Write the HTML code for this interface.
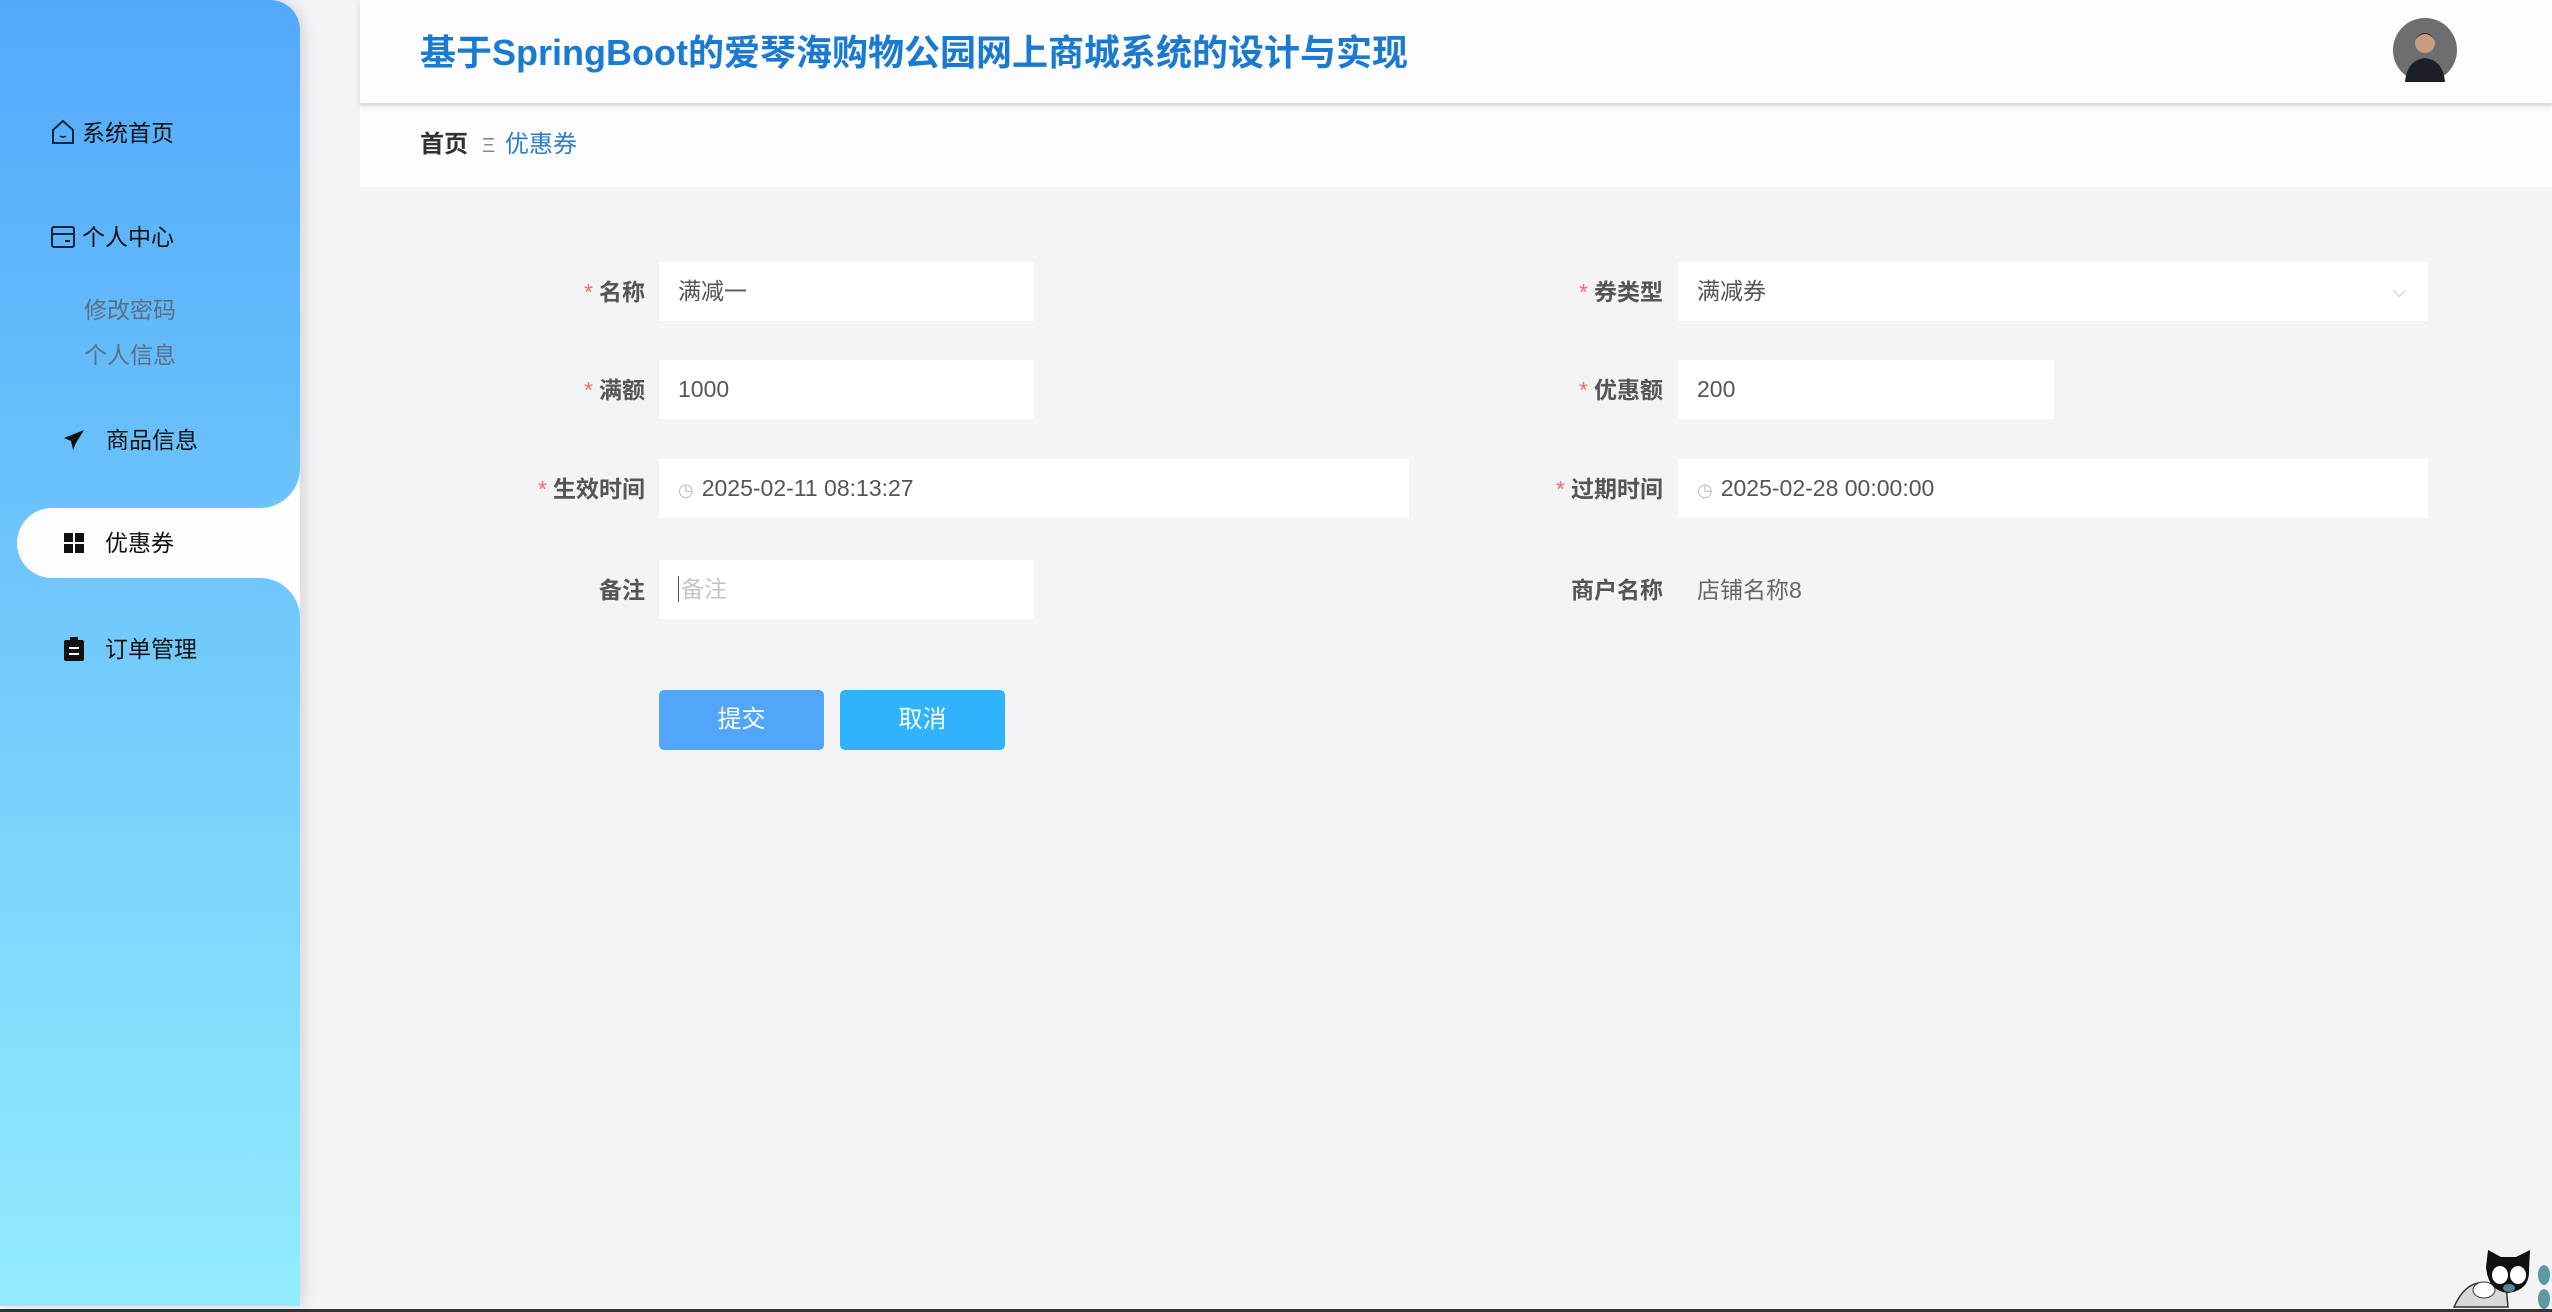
<!DOCTYPE html>
<html><head><meta charset="utf-8">
<style>
*{margin:0;padding:0;box-sizing:border-box}
body{width:2552px;height:1312px;overflow:hidden;background:#f4f3f5;font-family:"Liberation Sans","Noto Sans CJK SC",sans-serif;position:relative}
.side{position:absolute;left:0;top:0;width:300px;height:1306px;background:linear-gradient(180deg,#52a9fb 0%,#6fc7fc 45%,#93ecfd 100%);border-radius:0 30px 0 0;box-shadow:4px 0 12px rgba(0,0,0,.12);z-index:2}
.mi{position:absolute;font-size:23px;color:#111;white-space:nowrap;line-height:30px}
.sub{position:absolute;font-size:23px;color:#5a6f82;line-height:30px}
.pill{position:absolute;left:17px;top:508px;width:283px;height:70px;background:#fdfcfe;border-radius:35px 0 0 35px}
.cor{position:absolute;right:0;width:40px;height:40px}
.header{position:absolute;left:360px;top:0;right:0;height:103px;background:#fdfcfe;box-shadow:0 3px 6px rgba(0,0,0,.12);z-index:1}
.title{position:absolute;left:420px;top:24px;font-size:36px;font-weight:bold;color:#1a7ad0}
.bc{position:absolute;left:360px;top:106px;right:0;height:81px;background:#fdfcfe}
.lab{position:absolute;font-size:23px;font-weight:bold;color:#555;text-align:right;line-height:30px}
.lab b{color:#f56c6c;font-weight:normal;margin-right:6px}
.inp{position:absolute;background:#fff;height:59px;font-size:23px;color:#555;padding-left:19px;line-height:59px;white-space:nowrap}
.btn{position:absolute;top:690px;height:60px;width:165px;border-radius:5px;color:#fff;font-size:24px;text-align:center;line-height:60px}
</style></head><body>
<div class="side">
  <div class="mi" style="left:50px;top:118px"><svg width="26" height="26" viewBox="0 0 26 26" style="vertical-align:-4px;margin-right:6px"><path d="M3 11 L13 2 L23 11 V24 H3 Z" fill="none" stroke="#15233a" stroke-width="2"/><path d="M10 17 Q13 19 16 17" fill="none" stroke="#15233a" stroke-width="1.6"/></svg>系统首页</div>
  <div class="mi" style="left:50px;top:222px"><svg width="26" height="24" viewBox="0 0 26 24" style="vertical-align:-4px;margin-right:6px"><rect x="2" y="2" width="22" height="20" rx="2" fill="none" stroke="#15233a" stroke-width="2"/><path d="M2 9 H24 M15 16 H20" stroke="#15233a" stroke-width="2"/></svg>个人中心</div>
  <div class="sub" style="left:84px;top:295px">修改密码</div>
  <div class="sub" style="left:84px;top:340px">个人信息</div>
  <div class="mi" style="left:63px;top:425px"><svg width="22" height="22" viewBox="0 0 22 22" style="vertical-align:-3px;margin-right:21px"><path d="M21 1 L1 9 L8 12 L10 21 L13 14 L21 1 Z" fill="#111"/></svg>商品信息</div>
  <div class="cor" style="top:468px;background:radial-gradient(circle at 0 0,transparent 39.5px,#fdfcfe 40.5px)"></div>
  <div class="pill"></div>
  <div class="cor" style="top:578px;background:radial-gradient(circle at 0 100%,transparent 39.5px,#fdfcfe 40.5px)"></div>
  <div class="mi" style="left:64px;top:528px"><svg width="20" height="20" viewBox="0 0 20 20" style="vertical-align:-2px;margin-right:21px"><rect x="0" y="0" width="9" height="9" fill="#111"/><rect x="11" y="0" width="9" height="9" fill="#111"/><rect x="0" y="11" width="9" height="9" fill="#111"/><rect x="11" y="11" width="9" height="9" fill="#111"/></svg>优惠券</div>
  <div class="mi" style="left:64px;top:634px"><svg width="20" height="24" viewBox="0 0 20 24" style="vertical-align:-4px;margin-right:21px"><rect x="0" y="3" width="20" height="21" rx="2" fill="#111"/><rect x="6" y="0" width="8" height="5" fill="#111"/><path d="M5 11 H15 M5 17 H15" stroke="#fff" stroke-width="2"/></svg>订单管理</div>
</div>
<div class="header"></div>
<div class="title" style="z-index:2">基于SpringBoot的爱琴海购物公园网上商城系统的设计与实现</div>
<svg style="position:absolute;left:2393px;top:18px;z-index:2" width="64" height="64" viewBox="0 0 64 64"><circle cx="32" cy="32" r="32" fill="#6e6e70"/><path d="M12 64 Q14 42 32 40 Q50 42 52 64 Z" fill="#1c1f26"/><circle cx="32" cy="25" r="10" fill="#c99c82"/><path d="M22 22 Q32 10 42 22 Q38 15 32 15 Q26 15 22 22Z" fill="#222"/></svg>
<div class="bc"><div style="position:absolute;left:60px;top:24px;font-size:24px;line-height:30px"><span style="font-weight:bold;color:#303133">首页</span><span style="color:#888;margin:0 10px 0 14px;font-size:20px">Ξ</span><span style="color:#2b7cc9">优惠券</span></div></div>

<div class="lab" style="left:500px;width:145px;top:277px"><b>*</b>名称</div>
<div class="inp" style="left:659px;top:262px;width:375px">满减一</div>
<div class="lab" style="left:500px;width:145px;top:375px"><b>*</b>满额</div>
<div class="inp" style="left:659px;top:360px;width:375px">1000</div>
<div class="lab" style="left:500px;width:145px;top:474px"><b>*</b>生效时间</div>
<div class="inp" style="left:659px;top:459px;width:750px"><span style="color:#bbb;font-size:18px;margin-right:8px">◷</span>2025-02-11 08:13:27</div>
<div class="lab" style="left:500px;width:145px;top:575px">备注</div>
<div class="inp" style="left:659px;top:560px;width:375px;color:#c0c4cc"><span style="border-left:1px solid #555;padding-left:2px">备注</span></div>

<div class="lab" style="left:1500px;width:163px;top:277px"><b>*</b>券类型</div>
<div class="inp" style="left:1678px;top:262px;width:750px">满减券<span style="position:absolute;right:22px;top:0;color:#bbb;font-size:18px">⌵</span></div>
<div class="lab" style="left:1500px;width:163px;top:375px"><b>*</b>优惠额</div>
<div class="inp" style="left:1678px;top:360px;width:376px">200</div>
<div class="lab" style="left:1500px;width:163px;top:474px"><b>*</b>过期时间</div>
<div class="inp" style="left:1678px;top:459px;width:750px"><span style="color:#bbb;font-size:18px;margin-right:8px">◷</span>2025-02-28 00:00:00</div>
<div class="lab" style="left:1500px;width:163px;top:575px">商户名称</div>
<div style="position:absolute;left:1697px;top:575px;font-size:23px;color:#666;line-height:30px">店铺名称8</div>

<div class="btn" style="left:659px;background:#51a6fb">提交</div>
<div class="btn" style="left:840px;background:#2fb3fc">取消</div>

<svg style="position:absolute;left:2442px;top:1245px" width="110" height="67" viewBox="0 0 102 67"><path d="M8 62 Q20 35 40 38 L60 40 L62 62 Z" fill="#d8d8dc" stroke="#333" stroke-width="1.5"/><ellipse cx="38" cy="45" rx="11" ry="8" fill="#fff" stroke="#333"/><path d="M40 22 L42 5 L55 12 L70 12 L84 5 L83 25 Q84 45 62 48 Q42 46 40 22Z" fill="#111"/><ellipse cx="54" cy="30" rx="8" ry="9" fill="#fff"/><ellipse cx="72" cy="30" rx="8" ry="9" fill="#fff"/><ellipse cx="63" cy="43" rx="6" ry="4" fill="#4d8a94"/><ellipse cx="98" cy="30" rx="6" ry="10" fill="#5b9aa3"/><ellipse cx="98" cy="54" rx="6" ry="10" fill="#5b9aa3"/></svg>
<div style="position:absolute;left:0;bottom:0;width:2552px;height:3px;background:#333"></div>
</body></html>
